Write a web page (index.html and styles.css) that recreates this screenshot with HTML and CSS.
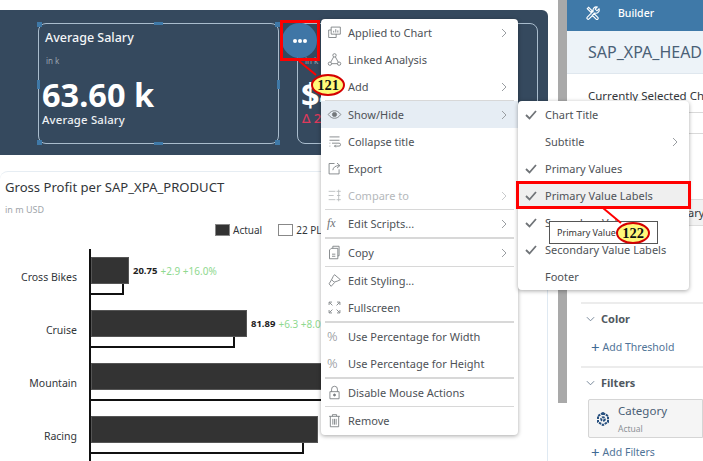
FILE: index.html
```html
<!DOCTYPE html>
<html lang="en">
<head>
<meta charset="utf-8">
<title>Story builder</title>
<link rel="stylesheet" href="styles.css">
</head>
<body>
<div class="app">
  <main class="canvas">
    <section class="kpi-band">
      <article class="kpi kpi-selected">
        <h2 class="kpi-title">Average Salary</h2>
        <p class="kpi-sub">in k</p>
        <p class="kpi-value">63.60 k</p>
        <p class="kpi-label">Average Salary</p>
        <i class="handle h-tl"></i><i class="handle h-tc"></i><i class="handle h-tr"></i>
        <i class="handle h-ml"></i><i class="handle h-mr"></i>
        <i class="handle h-bl"></i><i class="handle h-bc"></i><i class="handle h-br"></i>
      </article>
      <article class="kpi kpi-second">
        <p class="kpi-sub second-sub">in k</p>
        <p class="kpi-value second-value">$4</p>
        <p class="kpi-delta">Δ 2</p>
      </article>
    </section>
    <section class="chart-card">
      <h2 class="chart-title">Gross Profit per SAP_XPA_PRODUCT</h2>
      <p class="chart-sub">in m USD</p>
      <div class="legend">
        <span class="legend-item"><i class="swatch swatch-dark"></i>Actual</span>
        <span class="legend-item"><i class="swatch"></i>22 PL</span>
      </div>
      <div class="bars">
        <div class="row">
          <span class="cat">Cross Bikes</span>
          <div class="bar-group">
            <div class="bar-line"><div class="bar-actual" style="width:38px"></div><b class="val">20.75</b><span class="var">+2.9 +16.0%</span></div>
            <div class="bar-plan" style="width:33px"></div>
          </div>
        </div>
        <div class="row">
          <span class="cat">Cruise</span>
          <div class="bar-group">
            <div class="bar-line"><div class="bar-actual" style="width:156px"></div><b class="val">81.89</b><span class="var">+6.3 +8.0%</span></div>
            <div class="bar-plan" style="width:144px"></div>
          </div>
        </div>
        <div class="row">
          <span class="cat">Mountain</span>
          <div class="bar-group">
            <div class="bar-line"><div class="bar-actual" style="width:300px"></div></div>
            <div class="bar-plan" style="width:300px"></div>
          </div>
        </div>
        <div class="row">
          <span class="cat">Racing</span>
          <div class="bar-group">
            <div class="bar-line"><div class="bar-actual" style="width:227px"></div></div>
            <div class="bar-plan" style="width:213px"></div>
          </div>
        </div>
      </div>
    </section>
  </main>

  <div class="scrollbar"><div class="thumb"></div></div>

  <aside class="builder">
    <header class="builder-head">
      <svg class="builder-icon" viewBox="0 0 16 16"><path d="M1.500 3L3 1.500l4 4-1.500 1.500zM8.500 8l5 5a1.400 1.400 0 0 1-2 2l-5-5M14.800 3.200l-2.300 2.300-2-2 2.300-2.300a3.600 3.600 0 0 0-4.500 4.700L1.500 12.700a1.400 1.400 0 0 0 2 2L10.300 8a3.600 3.600 0 0 0 4.500-4.800z"/></svg>
      <span>Builder</span>
    </header>
    <div class="builder-name">SAP_XPA_HEAD</div>
    <div class="builder-body">
      <p class="selected-label">Currently Selected Ch</p>
      <div class="rule rule-a"></div>
      <div class="rule rule-b"></div>
      <div class="dim-row">ary</div>
      <section class="group group-color">
        <h3 class="group-title"><svg class="chev" viewBox="0 0 10 6"><path d="M1 1l4 4 4-4"/></svg>Color</h3>
        <a class="add-link add-threshold"><span class="plus">+</span>Add Threshold</a>
      </section>
      <section class="group group-filters">
        <h3 class="group-title"><svg class="chev" viewBox="0 0 10 6"><path d="M1 1l4 4 4-4"/></svg>Filters</h3>
        <div class="filter-token">
          <svg class="token-icon" viewBox="0 0 12 14"><path d="M6 1l5 3v6l-5 3-5-3V4z"/><circle cx="6" cy="7" r="1.800"/></svg>
          <div><div class="token-name">Category</div><div class="token-sub">Actual</div></div>
        </div>
        <a class="add-link add-filter"><span class="plus">+</span>Add Filters</a>
      </section>
    </div>
  </aside>
</div>

<div class="more-btn"><span></span><span></span><span></span></div>
<div class="hl hl-more"></div>

<nav class="menu main-menu">
  <div class="mi"><svg class="ic" viewBox="0 0 18 18"><path d="M5 2.500h11v8.500H5zM5 6H2v9h9v-4M8 9V7M10.500 9V5M13 9V6.500"/></svg><span>Applied to Chart</span><svg class="arrow" viewBox="0 0 6 10"><path d="M1 1l4 4-4 4"/></svg></div>
  <div class="mi"><svg class="ic" viewBox="0 0 18 18"><circle cx="9" cy="4" r="2"/><circle cx="3.500" cy="14" r="2"/><circle cx="14.500" cy="14" r="2"/><path d="M8 5.800l-3.500 6.400M10 5.800l3.500 6.400M5.500 14h7"/></svg><span>Linked Analysis</span></div>
  <div class="mi"><span class="ic"></span><span>Add</span><svg class="arrow" viewBox="0 0 6 10"><path d="M1 1l4 4-4 4"/></svg></div>
  <div class="sep"></div>
  <div class="mi mi-active"><svg class="ic" viewBox="0 0 18 18"><path d="M1.500 9C4 5.500 6.500 4.500 9 4.500S14 5.500 16.500 9C14 12.500 11.500 13.500 9 13.500S4 12.500 1.500 9z"/><circle cx="9" cy="9" r="2.500" class="fill"/></svg><span>Show/Hide</span><svg class="arrow" viewBox="0 0 6 10"><path d="M1 1l4 4-4 4"/></svg></div>
  <div class="mi"><svg class="ic" viewBox="0 0 18 18"><path d="M3 3.500h12M3 7.500h12M6 11h8.500a1.500 1.500 0 0 1 0 3.500H9M3 11h1M3 14.500h1M10.500 13L9 14.500l1.500 1.500"/></svg><span>Collapse title</span></div>
  <div class="mi"><svg class="ic" viewBox="0 0 18 18"><path d="M9 3H2.500v12.500h12V10M7 11c.500-3.500 3-5.500 8-5.500M12 2.500l3.500 3-3.500 3"/></svg><span>Export</span></div>
  <div class="mi mi-disabled"><svg class="ic" viewBox="0 0 18 18"><path d="M2 4h8M2 9h6M2 14h8M12 9h4M14 2v14M11.500 4h5M11.500 14h5"/></svg><span>Compare to</span><svg class="arrow" viewBox="0 0 6 10"><path d="M1 1l4 4-4 4"/></svg></div>
  <div class="sep"></div>
  <div class="mi"><span class="ic fx">fx</span><span>Edit Scripts...</span><svg class="arrow" viewBox="0 0 6 10"><path d="M1 1l4 4-4 4"/></svg></div>
  <div class="sep sep-wide"></div>
  <div class="mi"><svg class="ic" viewBox="0 0 18 18"><path d="M7 4V1.500h7.500v11.500H13M3 6l2-2h8v12.500H3zM6 11h4M6 13.500h4"/></svg><span>Copy</span><svg class="arrow" viewBox="0 0 6 10"><path d="M1 1l4 4-4 4"/></svg></div>
  <div class="sep"></div>
  <div class="mi"><svg class="ic" viewBox="0 0 18 18"><path d="M9 2l7 6-3 1.500-4.500 1.500-3-3L7.500 4zM5.500 8L2.500 13l2.500 3 4-4.500"/></svg><span>Edit Styling...</span></div>
  <div class="mi"><svg class="ic" viewBox="0 0 18 18"><path d="M2.500 6V2.500H6M12 2.500h3.500V6M2.500 12v3.500H6M15.500 12v3.500H12M3 3l3.500 3.500M15 3l-3.500 3.500M3 15l3.500-3.500M15 15l-3.500-3.500"/></svg><span>Fullscreen</span></div>
  <div class="sep sep-wide"></div>
  <div class="mi"><span class="ic pct">%</span><span>Use Percentage for Width</span></div>
  <div class="mi"><span class="ic pct">%</span><span>Use Percentage for Height</span></div>
  <div class="sep sep-wide"></div>
  <div class="mi"><svg class="ic" viewBox="0 0 18 18"><path d="M5.500 8V5a3.500 3.500 0 0 1 7 0v3M3.500 8h11v8.500h-11z"/><circle cx="9" cy="12" r="1.200" class="fill"/></svg><span>Disable Mouse Actions</span></div>
  <div class="sep"></div>
  <div class="mi"><svg class="ic" viewBox="0 0 18 18"><path d="M2.500 4h13M6.500 4V2h5v2M4 4v12.500h10V4M7 7v7M9 7v7M11 7v7"/></svg><span>Remove</span></div>
</nav>

<nav class="menu sub-menu">
  <div class="mi"><svg class="check" viewBox="0 0 12 10"><path d="M1 5l3.500 3.500L11 1"/></svg><span>Chart Title</span></div>
  <div class="mi"><span class="check"></span><span>Subtitle</span><svg class="arrow" viewBox="0 0 6 10"><path d="M1 1l4 4-4 4"/></svg></div>
  <div class="mi"><svg class="check" viewBox="0 0 12 10"><path d="M1 5l3.500 3.500L11 1"/></svg><span>Primary Values</span></div>
  <div class="mi mi-hover"><svg class="check" viewBox="0 0 12 10"><path d="M1 5l3.500 3.500L11 1"/></svg><span>Primary Value Labels</span></div>
  <div class="mi"><svg class="check" viewBox="0 0 12 10"><path d="M1 5l3.500 3.500L11 1"/></svg><span>Secondary Values</span></div>
  <div class="mi"><svg class="check" viewBox="0 0 12 10"><path d="M1 5l3.500 3.500L11 1"/></svg><span>Secondary Value Labels</span></div>
  <div class="mi"><span class="check"></span><span>Footer</span></div>
</nav>
<div class="hl hl-item"></div>
<div class="tooltip">Primary Value Labels</div>

<svg class="leader" viewBox="0 0 703 461"><path d="M299 61l17 14M603 208l18 15"/></svg>
<div class="callout callout-121">121</div>
<div class="callout callout-122">122</div>
</body>
</html>
```
FILE: styles.css
```css
* { box-sizing: border-box; }
html, body { margin: 0; padding: 0; }
body {
  width: 703px;
  height: 461px;
  overflow: hidden;
  position: relative;
  background: #fff;
  font-family: "Noto Sans", "Open Sans", "Liberation Sans", sans-serif;
  color: #32363a;
}
h2, h3, p { margin: 0; font-weight: normal; }

.app { display: flex; height: 461px; }
.canvas { width: 558px; padding-top: 10px; flex: none; }
.scrollbar { width: 9px; flex: none; background: #fff; }
.scrollbar .thumb { height: 403px; background: #a9a9a9; }
.builder { flex: 1; min-width: 0; overflow: hidden; }

/* KPI band */
.kpi-band {
  width: 548px; height: 145px;
  background: #35495e;
  border-radius: 0 6px 0 0;
  padding: 13px 10px 0 38px;
  display: flex; gap: 18px;
}
.kpi {
  position: relative;
  width: 241px; height: 121px;
  border: 1px solid #a9bccd;
  border-radius: 8px;
  color: #fff;
}
.kpi-title { font-size: 12.500px; font-weight: 500; line-height: 18px; padding: 5px 0 0 6px; color: #f4f6f8; }
.kpi-sub { font-size: 8px; line-height: 12px; padding: 8px 0 0 7px; color: #9aa5b1; }
.kpi-value { font-size: 32.500px; font-weight: 700; line-height: 36px; padding: 10px 0 0 3px; white-space: nowrap; }
.kpi-label { font-size: 11.300px; font-weight: 500; line-height: 14px; padding-left: 3px; color: #eef1f4; letter-spacing: .2px; }
.second-sub { padding-top: 31px; }
.second-value { padding-left: 3px; }
.kpi-delta { padding-left: 4px; font-size: 13px; font-weight: 500; line-height: 11px; color: #de3a5c; }
.handle { position: absolute; background: #3f79a8; }
.h-tl, .h-tr, .h-bl, .h-br { width: 5px; height: 5px; }
.h-tl { left: -2px; top: -2px; } .h-tr { right: -2px; top: -2px; }
.h-bl { left: -2px; bottom: -2px; } .h-br { right: -2px; bottom: -2px; }
.h-tc, .h-bc { width: 9px; height: 3px; left: 115px; }
.h-tc { top: -2px; } .h-bc { bottom: -2px; }
.h-ml, .h-mr { width: 3px; height: 9px; top: 56px; }
.h-ml { left: -2px; } .h-mr { right: -2px; }

/* Chart */
.chart-card {
  width: 548px;
  margin-top: 16px;
  height: 290px;
  border-top: 1px solid #e6edf3;
  border-right: 1px solid #dfe9f2;
  border-radius: 8px 0 0 0;
  overflow: hidden;
  padding-left: 5px;
}
.chart-title { font-size: 13.100px; line-height: 18px; padding-top: 6px; height: 24px; color: #32363a; white-space: nowrap; }
.chart-sub { font-size: 9px; line-height: 12px; padding-top: 8px; height: 19px; color: #a0a5aa; }
.legend { display: flex; gap: 16px; padding: 8px 0 0 210px; height: 21px; }
.legend-item { display: flex; align-items: center; gap: 3px; font-size: 10px; color: #32363a; white-space: nowrap; }
.swatch { width: 15px; height: 12px; border: 1px solid #888; background: #fff; }
.swatch-dark { background: #333; }
.bars { margin-left: -5px; padding-top: 13px; height: 240px; }
.row { display: flex; height: 53px; }
.cat { width: 77px; font-size: 10.500px; line-height: 14px; text-align: right; padding-top: 21px; color: #32363a; flex: none; }
.bar-group { border-left: 2px solid #111; margin-left: 12px; padding-top: 8px; flex: 1; }
.bar-line { display: flex; align-items: center; height: 27px; white-space: nowrap; }
.bar-actual { height: 27px; background: #333; border: 1px solid #555; flex: none; }
.val { font-size: 9.500px; font-weight: 700; margin: 0 3px 0 4px; color: #222; }
.var { font-size: 10px; color: #8fd98f; }
.bar-plan { height: 11px; border: 1px solid #111; border-width: 0 2px 2px 0; background: #fff; }

/* Builder */
.builder-head { height: 31px; background: #3f79a8; color: #fff; display: flex; align-items: center; gap: 18px; padding: 0 0 5px 19px; font-size: 10.500px; font-weight: 500; }
.builder-icon { width: 14px; height: 14px; fill: none; stroke: #fff; stroke-width: 1.300; }
.builder-name { height: 43px; background: #edf3f8; color: #4a6076; font-size: 16px; line-height: 42px; padding-left: 21px; white-space: nowrap; border-bottom: 1px solid #dfe7ee; }
.builder-body { padding: 0 0 0 14px; }
.selected-label { font-size: 11.500px; line-height: 14px; padding: 15px 0 0 7px; white-space: nowrap; }
.rule { height: 1px; background: #d9d9d9; margin-left: 6px; }
.rule-a { margin-top: 9px; }
.rule-b { margin-top: 20px; }
.dim-row { height: 27px; margin: 65px 0 0 6px; background: #f2f2f2; border: 1px solid #ddd; border-width: 1px 0; font-size: 11px; line-height: 26px; padding-left: 101px; }
.group { border-top: 2px solid #ececec; }
.group-color { margin-top: 76px; height: 64px; }
.group-title { font-size: 11px; font-weight: 700; line-height: 16px; color: #50585f; padding: 7px 0 0 5px; display: flex; align-items: center; gap: 6px; }
.chev { width: 9px; height: 6px; fill: none; stroke: #6a7c8e; stroke-width: 1; }
.add-link { display: flex; align-items: center; gap: 3px; padding-left: 10px; font-size: 10.500px; line-height: 14px; color: #4f7397; white-space: nowrap; }
.add-threshold { padding-top: 13px; }
.plus { font-size: 15px; line-height: 14px; color: #3f6b94; }
.filter-token { margin: 8px 0 0 7px; height: 39px; background: #f5f5f5; border: 1px solid #d5d5d5; border-radius: 2px 0 0 2px; display: flex; align-items: flex-start; gap: 9px; padding: 3px 0 0 8px; }
.token-icon { width: 12px; height: 14px; margin-top: 9px; fill: none; stroke: #27507f; stroke-width: 2; stroke-dasharray: 2.500 .8; }
.token-name { font-size: 11.500px; line-height: 16px; color: #4a6076; }
.token-sub { font-size: 8.500px; line-height: 12px; padding-top: 4px; color: #8d9298; }
.add-filter { padding-top: 7px; }

/* Menus */
.menu {
  position: absolute;
  background: #fff;
  border-radius: 4px;
  box-shadow: 0 1px 4px rgba(0,0,0,.35);
  font-size: 11px;
  color: #4e5257;
}
.main-menu { left: 321px; top: 19px; width: 197px; padding-bottom: 1px; }
.sub-menu { left: 518px; top: 101px; width: 171px; }
.mi { height: 27px; display: flex; align-items: center; position: relative; white-space: nowrap; }
.main-menu .mi { padding-left: 6px; }
.ic { width: 15px; height: 15px; flex: none; margin-right: 6px; fill: none; stroke: #74787c; stroke-width: 1; display: inline-block; overflow: visible; }
.ic .fill { fill: #74787c; }
.fx { font: italic 12px/15px "Liberation Serif", serif; color: #6e7276; }
.pct { font-size: 13px; line-height: 15px; color: #8a8e92; font-weight: 300; }
.arrow { position: absolute; right: 11px; top: 9px; width: 6px; height: 10px; fill: none; stroke: #9a9ea2; stroke-width: 1; }
.sep { height: 1px; margin: 0 4px; background: #d8d8d8; }
.sep-wide { height: 2px; }
.mi-active { background: #e6edf4; }
.mi-disabled { color: #b5b8bb; }
.mi-disabled .ic { stroke: #b5b8bb; }
.mi-disabled .arrow { stroke: #c8cacc; }
.check { width: 12px; height: 10px; margin: 0 8px 0 7px; flex: none; fill: none; stroke: #707478; stroke-width: 1.800; }
.mi-hover { background: #efefef; }

/* Annotations */
.more-btn { position: absolute; left: 282px; top: 23px; width: 35px; height: 35px; border-radius: 50%; background: #3f76a6; display: flex; align-items: center; justify-content: center; gap: 1px; }
.more-btn span { width: 4px; height: 4px; border-radius: 50%; background: #fff; }
.hl { position: absolute; border: 3px solid #f00; }
.hl-more { left: 280px; top: 20px; width: 40px; height: 41px; }
.hl-item { left: 516px; top: 181px; width: 175px; height: 28px; }
.tooltip { position: absolute; left: 549px; top: 221px; width: 109px; height: 23px; background: #fff; border: 1px solid #555; font-size: 9px; line-height: 21px; padding-left: 7px; color: #333; white-space: nowrap; overflow: hidden; }
.leader { position: absolute; left: 0; top: 0; width: 703px; height: 461px; fill: none; stroke: #f00; stroke-width: 2; pointer-events: none; }
.callout { position: absolute; height: 22px; border: 2px solid #d40000; border-radius: 50%; background: #fff97a; color: #111; font: 700 14.500px/18px "Liberation Serif", serif; text-align: center; }
.callout-121 { left: 311px; top: 74px; width: 34px; }
.callout-122 { left: 616px; top: 222px; width: 34px; }
```
